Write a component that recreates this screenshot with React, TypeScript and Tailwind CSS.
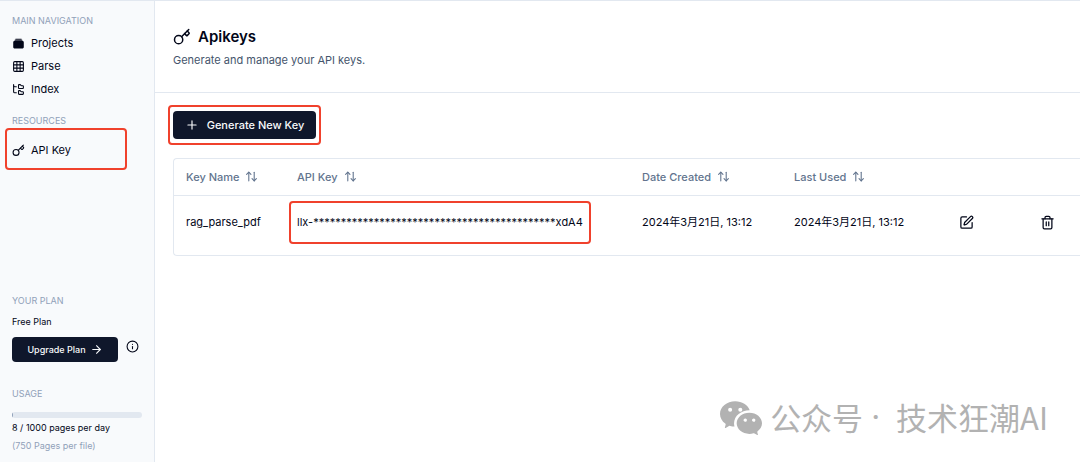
import type { ReactNode } from 'react'
import { ArrowRight, ArrowUpDown, FolderTree, Grid3x3, Info, Key, Plus, SquarePen, Trash2 } from 'lucide-react'
import { BsWechat } from 'react-icons/bs'
import { IoAlbums } from 'react-icons/io5'

const navigation = [
  { label: 'Projects', icon: <IoAlbums size={13} /> },
  { label: 'Parse', icon: <Grid3x3 size={13} /> },
  { label: 'Index', icon: <FolderTree size={13} /> },
]

const columns = [
  { label: 'Key Name', width: 'w-[111px]' },
  { label: 'API Key', width: 'w-[345px]' },
  { label: 'Date Created', width: 'w-[152px]' },
  { label: 'Last Used', width: 'w-[165px]' },
]

const keys = [
  {
    name: 'rag_parse_pdf',
    value: `llx-${'*'.repeat(44)}xdA4`,
    created: '2024年3月21日, 13:12',
    used: '2024年3月21日, 13:12',
  },
]

const usage = { used: 8, limit: 1000 }

function SectionLabel({ children }: { children: ReactNode }) {
  return <h2 className="text-[9px] leading-3 text-slate-400">{children}</h2>
}

function NavLink({ icon, label }: { icon: ReactNode; label: string }) {
  return (
    <a href="#" className="flex items-center gap-1.5 text-[11px] leading-4">
      {icon}
      {label}
    </a>
  )
}

// Red frame drawn around whatever it is nested in
function Highlight({ className }: { className: string }) {
  return <span className={`pointer-events-none absolute rounded border-2 border-[#f0412c] ${className}`} />
}

function Sidebar() {
  return (
    <aside className="flex w-[155px] shrink-0 flex-col border-r border-slate-200 bg-slate-50 px-3 pt-3.5 pb-2">
      <SectionLabel>MAIN NAVIGATION</SectionLabel>
      <nav className="mt-2 flex flex-col gap-[7px]">
        {navigation.map((item) => (
          <NavLink key={item.label} {...item} />
        ))}
      </nav>

      <div className="mt-[18px]">
        <SectionLabel>RESOURCES</SectionLabel>
        <nav className="relative mt-[15px]">
          <NavLink icon={<Key size={13} />} label="API Key" />
          <Highlight className="-top-3.5 right-[15px] -bottom-3 -left-[7px]" />
        </nav>
      </div>

      <div className="mt-auto">
        <SectionLabel>YOUR PLAN</SectionLabel>
        <p className="mt-[7px] text-[9px] leading-4">Free Plan</p>
        <div className="mt-[7px] flex items-start gap-2">
          <button className="flex h-[25px] w-[106px] items-center justify-center gap-1 rounded bg-slate-900 text-[9px] font-medium text-slate-50">
            Upgrade Plan
            <ArrowRight size={13} />
          </button>
          <button aria-label="Plan details" className="mt-[3px]">
            <Info size={13} />
          </button>
        </div>
      </div>

      <div className="mt-[26px]">
        <SectionLabel>USAGE</SectionLabel>
        <div className="mt-3 h-1.5 overflow-hidden rounded-full bg-slate-200">
          <div className="h-full bg-slate-400" style={{ width: `${(usage.used / usage.limit) * 100}%` }} />
        </div>
        <p className="mt-0.5 text-[9px] leading-4">
          {usage.used} / {usage.limit} pages per day
        </p>
        <p className="mt-0.5 text-[9px] leading-4 text-slate-400">(750 Pages per file)</p>
      </div>
    </aside>
  )
}

function KeysTable() {
  return (
    <div className="rounded-l border border-r-0 border-slate-200">
      <table className="w-full table-fixed text-left text-[11px]">
        <thead>
          <tr className="h-9 border-b border-slate-200 text-slate-500">
            {columns.map((column) => (
              <th key={column.label} className={`pl-3 font-medium ${column.width}`}>
                <button className="flex items-center gap-1.5">
                  {column.label}
                  <ArrowUpDown size={13} />
                </button>
              </th>
            ))}
            <th className="w-[81px]" />
            <th />
          </tr>
        </thead>
        <tbody>
          {keys.map((key) => (
            <tr key={key.name} className="h-[60px]">
              <td className="pb-1.5 pl-3">{key.name}</td>
              <td className="pb-1.5 pl-3">
                <span className="relative inline-block whitespace-nowrap">
                  {key.value}
                  <Highlight className="-top-[13px] -right-2 -bottom-[13px] -left-2" />
                </span>
              </td>
              <td className="pb-1.5 pl-3">{key.created}</td>
              <td className="pb-1.5 pl-3">{key.used}</td>
              <td className="pb-1.5 pl-3">
                <button aria-label="Edit key" className="block">
                  <SquarePen size={15} />
                </button>
              </td>
              <td className="pb-1.5 pl-3">
                <button aria-label="Delete key" className="block">
                  <Trash2 size={15} />
                </button>
              </td>
            </tr>
          ))}
        </tbody>
      </table>
    </div>
  )
}

export default function App() {
  return (
    <div className="relative flex min-h-screen overflow-hidden border-t border-slate-200 bg-white font-['Inter','Noto_Sans_CJK_SC',sans-serif] text-slate-950">
      <Sidebar />

      <main className="min-w-0 flex-1">
        <header className="border-b border-slate-200 px-[18px] pt-6 pb-6">
          <h1 className="flex items-center gap-[7px] text-[15px] leading-6 font-semibold">
            <Key size={18} />
            Apikeys
          </h1>
          <p className="mt-[3px] text-[11px] leading-4 text-slate-600">Generate and manage your API keys.</p>
        </header>

        <section className="pt-[18px] pl-[18px]">
          <div className="relative mb-[19px] w-fit">
            <button className="flex h-7 w-[143px] items-center justify-center gap-2 rounded bg-slate-900 text-[11px] font-medium text-slate-50">
              <Plus size={14} />
              Generate New Key
            </button>
            <Highlight className="-inset-x-[5px] -inset-y-[6px]" />
          </div>
          <KeysTable />
        </section>
      </main>

      <div className="pointer-events-none absolute right-8 bottom-6 flex items-center gap-2 font-['Noto_Sans_CJK_SC',sans-serif] text-[31px] leading-10 text-[#b2b2b2]">
        <BsWechat size={42} />
        <span>公众号</span>
        <span className="mr-2 font-['Inter',sans-serif]">·</span>
        <span>技术狂潮AI</span>
      </div>
    </div>
  )
}
